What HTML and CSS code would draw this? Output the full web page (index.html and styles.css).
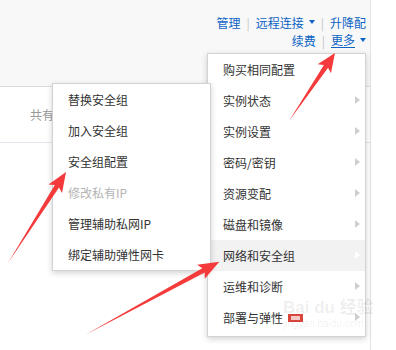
FILE: index.html
```html
<!DOCTYPE html>
<html>
<head>
  <title>实例操作</title>
  <link rel="stylesheet" href="styles.css">
</head>
<body>
  <div class="page">
    <div class="panel">
      <div class="panel-head">
        <div class="actions">
          <div class="action-line">
            <a class="act">管理</a><span class="sep">|</span>
            <a class="act">远程连接<i class="caret"></i></a><span class="sep">|</span>
            <a class="act">升降配</a>
          </div>
          <div class="action-line">
            <a class="act">续费</a><span class="sep">|</span>
            <a class="act more">更多</a><i class="caret"></i>
          </div>
        </div>
      </div>
      <div class="panel-row">
        <span class="total">共有</span>
      </div>
    </div>

    <ul class="menu main-menu">
      <li>购买相同配置</li>
      <li class="has-sub">实例状态</li>
      <li class="has-sub">实例设置</li>
      <li class="has-sub">密码/密钥</li>
      <li class="has-sub">资源变配</li>
      <li class="has-sub">磁盘和镜像</li>
      <li class="has-sub active">网络和安全组</li>
      <li class="has-sub">运维和诊断</li>
      <li class="has-sub">部署与弹性<i class="new-tag"></i></li>
    </ul>

    <ul class="menu sub-menu">
      <li>替换安全组</li>
      <li>加入安全组</li>
      <li>安全组配置</li>
      <li class="disabled">修改私有IP</li>
      <li>管理辅助私网IP</li>
      <li>绑定辅助弹性网卡</li>
    </ul>

    <div class="watermark">
      <span class="wm-logo">Bai du 经验</span>
      <span class="wm-url">jingyan.baidu.com</span>
    </div>

    <svg class="marks" width="396" height="350" viewBox="0 0 396 350">
      <g transform="translate(289 121) rotate(-55.9)">
        <polygon points="0,0 66,-2.5 63,-8 82,0 63,8 66,2.5"/>
      </g>
      <g transform="translate(8 263) rotate(-57.5)">
        <polygon points="0,0 91,-2.5 88,-8 108,0 88,8 91,2.5"/>
      </g>
      <g transform="translate(85 335) rotate(-28.6)">
        <polygon points="0,0 135,-2.5 132,-8 153,0 132,8 135,2.5"/>
      </g>
    </svg>
  </div>
</body>
</html>
```

FILE: styles.css
```css
body {
  margin: 0;
  background: #fff;
  font-family: "Noto Sans CJK SC", "Liberation Sans", sans-serif;
  font-size: 12px;
  color: #333;
}

.page {
  position: relative;
  width: 396px;
  height: 350px;
  overflow: hidden;
}

.panel {
  width: 370px;
  height: 350px;
  border-right: 1px solid #e2e2e2;
}

.panel-head {
  height: 87px;
  background-color: #f8f8f8;
  border-bottom: 1px solid #dcdcdc;
  box-sizing: border-box;
  display: flex;
  justify-content: flex-end;
  padding: 13px 4px 0 0;
}

.actions {
  display: flex;
  flex-direction: column;
  align-items: flex-end;
}

.action-line {
  display: flex;
  align-items: center;
  height: 18px;
}

.act {
  color: #0b63c5;
  text-decoration: none;
  display: flex;
  align-items: center;
}

.act.more {
  border-bottom: 1px solid #0b63c5;
  line-height: 14px;
}

.sep {
  color: #c4c4c4;
  margin: 0 6px;
}

.caret {
  display: inline-block;
  width: 0;
  height: 0;
  border-left: 3.5px solid transparent;
  border-right: 3.5px solid transparent;
  border-top: 4px solid #0b63c5;
  margin-left: 5px;
}

.panel-row {
  height: 56px;
  border-bottom: 1px solid #e1e6ec;
  box-sizing: border-box;
  display: flex;
  align-items: center;
  padding-left: 30px;
}

.total {
  color: #999;
}

.menu {
  position: absolute;
  list-style: none;
  margin: 0;
  padding: 0;
  background: #fff;
  border: 1px solid #d3d3d3;
  box-shadow: 0 2px 6px rgba(0, 0, 0, 0.18);
}

.menu li {
  height: 31px;
  line-height: 31px;
  padding-left: 15px;
  position: relative;
  white-space: nowrap;
}

.main-menu {
  left: 207px;
  top: 53px;
  width: 157px;
  padding-bottom: 3px;
}

.main-menu li.has-sub::after {
  content: "";
  position: absolute;
  right: 5px;
  top: 11px;
  border-left: 5px solid #cfcfcf;
  border-top: 4.5px solid transparent;
  border-bottom: 4.5px solid transparent;
}

.main-menu li.active {
  background-color: #f2f2f2;
}

.main-menu li.active::after {
  border-left-color: #fff;
}

/* small red "new" badge */
.new-tag {
  display: inline-block;
  vertical-align: middle;
  margin-left: 5px;
  margin-top: -3px;
  width: 15px;
  height: 8px;
  background: #d9463d;
  position: relative;
}

.new-tag::after {
  content: "";
  position: absolute;
  left: 3px;
  top: 2px;
  width: 9px;
  height: 4px;
  background: #f4c8c4;
}

.sub-menu {
  left: 52px;
  top: 83px;
  width: 157px;
  z-index: 2;
}

.sub-menu li.disabled {
  color: #b4b4b4;
}

.watermark {
  position: absolute;
  left: 283px;
  top: 298px;
  display: flex;
  flex-direction: column;
  color: rgba(0, 0, 0, 0.08);
  z-index: 3;
  font-family: "Liberation Sans", "Noto Sans CJK SC", sans-serif;
}

.wm-logo {
  font-size: 17px;
  font-weight: bold;
  line-height: 20px;
}

.wm-url {
  font-size: 10px;
  line-height: 12px;
}

.marks {
  position: absolute;
  left: 0;
  top: 0;
  z-index: 4;
}

.marks polygon {
  fill: #f43a3a;
}
```
